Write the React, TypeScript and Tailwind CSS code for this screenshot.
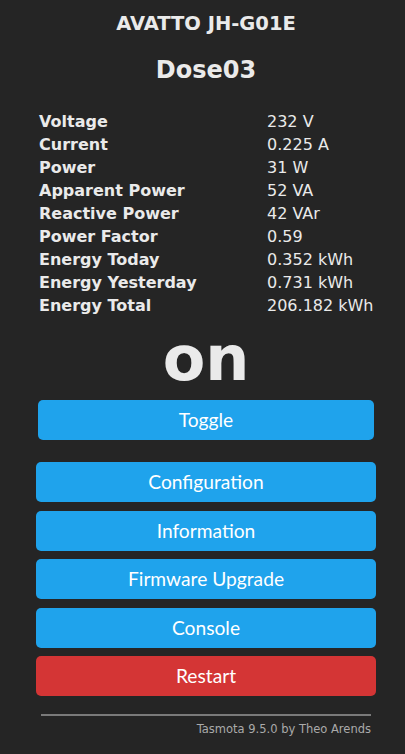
import React from 'react';

const readings: [string, string][] = [
  ['Voltage', '232 V'],
  ['Current', '0.225 A'],
  ['Power', '31 W'],
  ['Apparent Power', '52 VA'],
  ['Reactive Power', '42 VAr'],
  ['Power Factor', '0.59'],
  ['Energy Today', '0.352 kWh'],
  ['Energy Yesterday', '0.731 kWh'],
  ['Energy Total', '206.182 kWh'],
];

const menu = ['Configuration', 'Information', 'Firmware Upgrade', 'Console'];

const btn = "w-full h-[40px] rounded-[5px] text-white text-[19.2px] leading-[40px] font-['Lato',sans-serif]";

export default function App() {
  return (
    <div className="min-h-[754px] w-full bg-[#252525] text-[#eaeaea] font-['DejaVu_Sans',Verdana,sans-serif]">
      <div className="w-[340px] ml-[36px] flex flex-col">
        {/* device name + friendly name */}
        <h3 className="mt-[13px] text-center text-[19.5px] leading-[22px] font-bold">AVATTO JH-G01E</h3>
        <h2 className="mt-[21px] text-center text-[24px] leading-[28px] font-bold">Dose03</h2>

        {/* sensor table */}
        <div className="mt-[26px] grid grid-cols-[228px_1fr] pl-[3px] text-[16px] leading-[23px] whitespace-nowrap">
          {readings.map(([label, value]) => (
            <React.Fragment key={label}>
              <div className="font-bold">{label}</div>
              <div>{value}</div>
            </React.Fragment>
          ))}
        </div>

        {/* power state */}
        <div className="mt-[6px] text-center text-[62px] leading-[72px] font-bold">on</div>

        <div className="mt-[5px] px-[2px]">
          <button className={`${btn} bg-[#1fa3ec]`}>Toggle</button>
        </div>

        <div className="mt-[22px] flex flex-col gap-[8.5px]">
          {menu.map(item => (
            <button key={item} className={`${btn} bg-[#1fa3ec]`}>
              {item}
            </button>
          ))}
          <button className={`${btn} bg-[#d43535]`}>Restart</button>
        </div>

        <div className="mt-[18px] mx-[5px] h-[2px] bg-[#7a7a7a]" />
        <div className="mt-[6px] mx-[5px] text-right text-[11.5px] leading-[14px] text-[#aaaaaa]">
          Tasmota 9.5.0 by Theo Arends
        </div>
      </div>
    </div>
  );
}
